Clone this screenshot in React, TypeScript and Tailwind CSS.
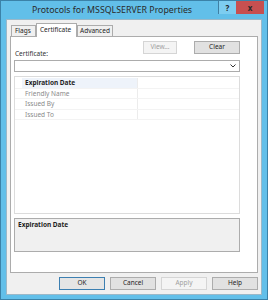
import React from 'react';

const font = { fontFamily: '"Segoe UI", "Noto Sans", "Liberation Sans", sans-serif' };

const Btn = ({ label, disabled, primary, w }: { label: string; disabled?: boolean; primary?: boolean; w: string }) => (
  <div
    className={`${w} h-[13px] flex items-center justify-center text-[6.5px] leading-none border ${
      disabled
        ? 'border-[#d5d5d5] bg-[#f4f4f4] text-[#a0a0a0]'
        : primary
        ? 'border-[#3c7fb1] bg-[#e5e5e5] text-[#1e1e1e]'
        : 'border-[#acacac] bg-[#e1e1e1] text-[#1e1e1e]'
    }`}
  >
    {label}
  </div>
);

const rows = ['Expiration Date', 'Friendly Name', 'Issued By', 'Issued To'];

export default function App() {
  return (
    <div className="w-[268px] h-[300px] bg-[#62bfe9] border border-[#3b82a8] flex flex-col" style={font}>
      {/* title bar */}
      <div className="h-[18px] flex shrink-0">
        <div className="flex-1 pl-[5px] pt-[3px] text-center text-[8.8px] leading-[12px] text-[#2a2a2a]">
          Protocols for MSSQLSERVER Properties
        </div>
        <div className="flex h-[13px] mr-[3px]">
          <div className="w-[18px] h-full bg-[#7dcdf0] border-l border-[#3f7fa3] flex items-center justify-center text-[8px] font-bold text-[#1d1d1d]">
            ?
          </div>
          <div className="w-[28px] h-full bg-[#c75050] flex items-center justify-center text-[8px] font-bold text-[#2a2a2a]">
            x
          </div>
        </div>
      </div>

      {/* client area */}
      <div className="mx-[5px] h-[276px] bg-[#f0f0f0] border border-[#9bb8c8] px-[3px] pt-[3px] flex flex-col text-[#1e1e1e]">
        {/* tabs */}
        <div className="flex items-end h-[13px] relative z-10 ml-[1px]">
          <div className="w-[25px] h-[11px] border border-b-0 border-[#acacac] bg-[#f0f0f0] text-[6.5px] leading-[10px] pl-[3px]">
            Flags
          </div>
          <div className="w-[41px] h-[14px] -mb-[1px] border border-b-0 border-[#acacac] bg-white text-[6.5px] leading-[11px] pl-[3px]">
            Certificate
          </div>
          <div className="w-[36px] h-[11px] border border-b-0 border-[#acacac] bg-[#f0f0f0] text-[6.5px] leading-[10px] pl-[2px]">
            Advanced
          </div>
        </div>

        {/* tab page */}
        <div className="h-[237px] border border-[#acacac] bg-white pl-[3px] pr-[17px] pt-[4px] flex flex-col">
          <div className="flex justify-end gap-[17px]">
            <Btn label="View..." disabled w="w-[34px]" />
            <Btn label="Clear" w="w-[46px]" />
          </div>
          <div className="text-[6.5px] leading-[6px] -mt-[3px] ml-[1px] text-[#333]">Certificate:</div>
          <div className="mt-[3px] h-[12px] border border-[#acacac] bg-white flex items-center justify-end pr-[3px]">
            <svg width="6" height="4" viewBox="0 0 6 4">
              <path d="M0.5 0.5 L3 3 L5.5 0.5" fill="none" stroke="#333" strokeWidth="1" />
            </svg>
          </div>

          {/* cert list */}
          <div className="mt-[4px] h-[138px] border border-[#dcdcdc] bg-white pt-[1px]">
            {rows.map((r, i) => (
              <div key={r} className="flex h-[10.5px] border-b border-[#f3f3f3]">
                <div
                  className={`w-[116px] ml-[7px] pl-[3px] text-[6.5px] leading-[10px] border-r border-[#ececec] ${
                    i === 0 ? 'bg-[#eef3fa] font-bold text-[#1e1e1e]' : 'text-[#8a8a8a]'
                  }`}
                >
                  {r}
                </div>
                <div className="flex-1" />
              </div>
            ))}
          </div>

          {/* description */}
          <div className="mt-[4px] h-[34px] border border-[#acacac] bg-[#f0f0f0] px-[3px] pt-[1px] text-[6.5px] leading-[9px] font-bold">
            Expiration Date
          </div>
        </div>

        {/* buttons */}
        <div className="flex justify-end gap-[5px] mt-[4px]">
          <Btn label="OK" primary w="w-[46px]" />
          <Btn label="Cancel" w="w-[46px]" />
          <Btn label="Apply" disabled w="w-[46px]" />
          <Btn label="Help" w="w-[46px]" />
        </div>
      </div>
    </div>
  );
}
